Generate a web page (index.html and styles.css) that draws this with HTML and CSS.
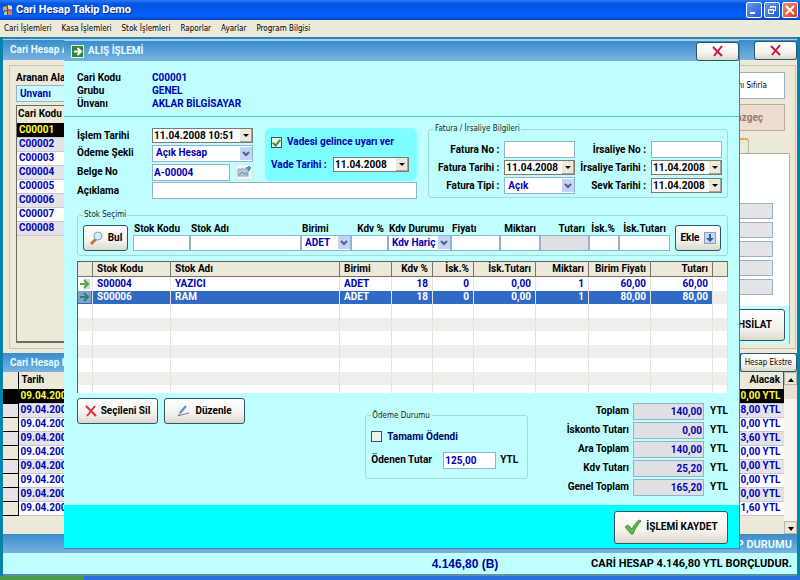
FILE: index.html
```
<!DOCTYPE html>
<html lang="tr">
<head>
    <meta charset="UTF-8">
    <meta name="viewport" content="width=device-width, initial-scale=1.0">
    <title>Cari Hesap Takip Demo</title>
    <link rel="stylesheet" href="styles.css">
</head>
<body>

<header class="titlebar">
    <svg width="12" height="12" viewBox="0 0 12 12"><path d="M1 3l4-1v4l-4 1z" fill="#f0a040"/><path d="M6 1l4 1v4L6 5z" fill="#e8d8a0"/><path d="M2 8l3-1v4l-3 0z" fill="#9fc4f0"/><path d="M6 6l4 1v4l-4 0z" fill="#f07830"/></svg>
    <h1>Cari Hesap Takip Demo</h1>
    <div class="win-buttons">
        <button aria-label="Simge"><svg width="14" height="14" viewBox="0 0 14 14"><path d="M3 10h5" stroke="#fff" stroke-width="2"/></svg></button>
        <button aria-label="Boyut"><svg width="14" height="14" viewBox="0 0 14 14" fill="none" stroke="#fff"><path d="M5.500 5V3.500h5v4H9M3.500 6.500h5v4h-5zM5 4h6M3 7h6"/></svg></button>
        <button class="red" aria-label="Kapat"><svg width="14" height="14" viewBox="0 0 14 14"><path d="M3 3l8 8M11 3l-8 8" stroke="#fff" stroke-width="2"/></svg></button>
    </div>
</header>

<nav class="menubar">
    <a href="#">Cari İşlemleri</a>
    <a href="#">Kasa İşlemleri</a>
    <a href="#">Stok İşlemleri</a>
    <a href="#">Raporlar</a>
    <a href="#">Ayarlar</a>
    <a href="#">Program Bilgisi</a>
</nav>

<!-- ARKA PENCERE -->
<main class="desktop">
    <div class="window">
        <div class="bar bar-top">
            <span>Cari Hesap A</span>
            <button class="btn close" aria-label="Kapat"><svg width="12" height="12" viewBox="0 0 12 12"><path d="M1 2l9 9M10 1L2 11" stroke="#c01848" stroke-width="2" fill="none"/></svg></button>
        </div>

        <div class="upper">
            <div class="search">
                <label for="aranan">Aranan Alan</label>
                <select id="aranan" class="plain"><option>Ünvanı</option></select>
                <div class="list">
                    <table>
                        <thead><tr><th>Cari Kodu</th></tr></thead>
                        <tbody>
                            <tr class="active"><td>C00001</td></tr>
                            <tr><td>C00002</td></tr>
                            <tr><td>C00003</td></tr>
                            <tr><td>C00004</td></tr>
                            <tr><td>C00005</td></tr>
                            <tr><td>C00006</td></tr>
                            <tr><td>C00007</td></tr>
                            <tr><td>C00008</td></tr>
                        </tbody>
                    </table>
                </div>
            </div>
            <div class="side">
                <button class="reset">nı Sıfırla</button>
                <button class="cancel" disabled>Vazgeç</button>
                <div class="tab"></div>
                <div class="panel">
                    <div class="slots"><i></i><i></i><i></i><i></i><i></i></div>
                    <div class="panel-foot"><button class="btn">TAHSİLAT</button></div>
                </div>
            </div>
        </div>

        <div class="bar bar-mid">
            <span>Cari Hesap H</span>
            <button class="btn extract">Hesap Ekstre</button>
        </div>

        <div class="moves">
            <table>
                <thead><tr><th class="mark"></th><th>Tarih</th><th class="num">Alacak</th></tr></thead>
                <tbody>
                    <tr class="active"><td class="mark"><svg width="5" height="8" viewBox="0 0 5 8"><path d="M0 0l5 4-5 4z"/></svg></td><td>09.04.2008</td><td class="num">0,00 YTL</td></tr>
                    <tr><td class="mark"></td><td>09.04.2008</td><td class="num">8,00 YTL</td></tr>
                    <tr><td class="mark"></td><td>09.04.2008</td><td class="num">0,00 YTL</td></tr>
                    <tr><td class="mark"></td><td>09.04.2008</td><td class="num">3,60 YTL</td></tr>
                    <tr><td class="mark"></td><td>09.04.2008</td><td class="num">0,00 YTL</td></tr>
                    <tr><td class="mark"></td><td>09.04.2008</td><td class="num">0,00 YTL</td></tr>
                    <tr><td class="mark"></td><td>09.04.2008</td><td class="num">0,00 YTL</td></tr>
                    <tr><td class="mark"></td><td>09.04.2008</td><td class="num">0,00 YTL</td></tr>
                    <tr><td class="mark"></td><td>09.04.2008</td><td class="num">1,60 YTL</td></tr>
                </tbody>
            </table>
            <div class="scroll">
                <button aria-label="Yukarı"><svg width="6" height="4" viewBox="0 0 6 4"><path d="M0 4l3-4 3 4z"/></svg></button>
                <i></i>
                <button aria-label="Aşağı"><svg width="6" height="4" viewBox="0 0 6 4"><path d="M0 0l3 4 3-4z"/></svg></button>
            </div>
        </div>

        <div class="bar summary-head"><span>HESAP BAKİYESİ</span><span>HESAP DURUMU</span></div>
        <div class="summary"><span>4.146,80 (B)</span><span>CARİ HESAP 4.146,80 YTL BORÇLUDUR.</span></div>
    </div>
</main>
<footer class="taskbar"><i></i></footer>

<!-- ALIŞ İŞLEMİ -->
<section class="dialog">
    <div class="bar dialog-head">
        <svg width="13" height="13" viewBox="0 0 13 13"><rect width="13" height="13" fill="#dff0d8"/><rect x="1" y="1" width="11" height="11" fill="#2f8a34"/><path d="M3 6.500h7M6.500 3L10 6.500 6.500 10" stroke="#fff" stroke-width="2" fill="none"/></svg>
        <h2>ALIŞ İŞLEMİ</h2>
        <button class="btn close" aria-label="Kapat"><svg width="12" height="12" viewBox="0 0 12 12"><path d="M1 2l9 9M10 1L2 11" stroke="#c01848" stroke-width="2" fill="none"/></svg></button>
    </div>

    <dl class="account">
        <dt>Cari Kodu</dt><dd>C00001</dd>
        <dt>Grubu</dt><dd>GENEL</dd>
        <dt>Ünvanı</dt><dd>AKLAR BİLGİSAYAR</dd>
    </dl>

    <div class="content">
        <div class="form">
            <div class="entry">
                <label for="tarih">İşlem Tarihi</label>
                <div class="date"><input id="tarih" value="11.04.2008 10:51"><button aria-label="Takvim"></button></div>
                <label for="odeme">Ödeme Şekli</label>
                <div class="combo"><select id="odeme"><option>Açık Hesap</option></select><svg viewBox="0 0 12 13"><path d="M3 5l3 3 3-3"/></svg></div>
                <label for="belge">Belge No</label>
                <div class="doc">
                    <input id="belge" value="A-00004">
                    <button aria-label="Belge"><svg width="15" height="13" viewBox="0 0 15 13"><rect x="1" y="4" width="10" height="7" fill="#bcc8cc" stroke="#8fa6ac"/><path d="M2 10l3-3 2 2 2-1 2 2" stroke="#5b8c9c" fill="none"/><path d="M9 3h5M12 1v5" stroke="#3d9bd0" stroke-width="2"/></svg></button>
                </div>
                <label for="aciklama">Açıklama</label>
                <input id="aciklama" class="wide">
                <div class="due">
                    <label><input type="checkbox" checked>Vadesi gelince uyarı ver</label>
                    <div class="due-row">
                        <label for="vade">Vade Tarihi :</label>
                        <div class="date"><input id="vade" value="11.04.2008"><button aria-label="Takvim"></button></div>
                    </div>
                </div>
            </div>

            <fieldset class="invoice">
                <legend>Fatura / İrsaliye Bilgileri</legend>
                <div class="invoice-grid">
                    <label for="fno">Fatura No :</label><input id="fno">
                    <label for="ino">İrsaliye No :</label><input id="ino">
                    <label for="ftarih">Fatura Tarihi :</label>
                    <div class="date"><input id="ftarih" value="11.04.2008"><button aria-label="Takvim"></button></div>
                    <label for="itarih">İrsaliye Tarihi :</label>
                    <div class="date"><input id="itarih" value="11.04.2008"><button aria-label="Takvim"></button></div>
                    <label for="ftipi">Fatura Tipi :</label>
                    <div class="combo"><select id="ftipi"><option>Açık</option></select><svg viewBox="0 0 12 13"><path d="M3 5l3 3 3-3"/></svg></div>
                    <label for="starih">Sevk Tarihi :</label>
                    <div class="date"><input id="starih" value="11.04.2008"><button aria-label="Takvim"></button></div>
                </div>
            </fieldset>
        </div>

        <fieldset class="stock">
            <legend>Stok Seçimi</legend>
            <div class="stock-row">
                <button class="btn find"><svg width="15" height="15" viewBox="0 0 15 15"><path d="M7 8l-5 5" stroke="#b5793c" stroke-width="3"/><circle cx="9" cy="5" r="4" fill="#d5ecfb" stroke="#7ba7cf"/></svg>Bul</button>
                <div class="stock-fields">
                    <label for="skodu">Stok Kodu</label>
                    <label for="sadi">Stok Adı</label>
                    <label for="birim">Birimi</label>
                    <label for="kdv" class="r">Kdv %</label>
                    <label for="kdvd">Kdv Durumu</label>
                    <label for="fiyat">Fiyatı</label>
                    <label for="miktar" class="r">Miktarı</label>
                    <label for="tutar" class="r">Tutarı</label>
                    <label for="isk" class="r">İsk.%</label>
                    <label for="iskt" class="r">İsk.Tutarı</label>
                    <input id="skodu">
                    <input id="sadi">
                    <div class="combo"><select id="birim"><option>ADET</option></select><svg viewBox="0 0 12 13"><path d="M3 5l3 3 3-3"/></svg></div>
                    <input id="kdv">
                    <div class="combo"><select id="kdvd"><option>Kdv Hariç</option></select><svg viewBox="0 0 12 13"><path d="M3 5l3 3 3-3"/></svg></div>
                    <input id="fiyat">
                    <input id="miktar">
                    <input id="tutar" class="off" readonly>
                    <input id="isk">
                    <input id="iskt">
                </div>
                <button class="btn add">Ekle<svg width="12" height="12" viewBox="0 0 12 12"><rect x="0.500" y="0.500" width="11" height="11" fill="#c5d8ee" stroke="#8aa0bc"/><path d="M5 2h2v4h3L6 10 2 6h3z" fill="#2a5fa8"/></svg></button>
            </div>
        </fieldset>

        <table class="items">
            <thead>
                <tr>
                    <th class="c-icon"></th><th class="c-code">Stok Kodu</th><th>Stok Adı</th><th class="c-unit">Birimi</th><th class="c-vat num">Kdv %</th><th class="c-vat num">İsk.%</th><th class="c-sum num">İsk.Tutarı</th><th class="c-qty num">Miktarı</th><th class="c-sum num">Birim Fiyatı</th><th class="c-sum num">Tutarı</th><th class="c-icon"></th>
                </tr>
            </thead>
            <tbody>
                <tr><td><svg width="13" height="12" viewBox="0 0 13 12"><rect x="6" y="1" width="6" height="10" fill="#c8dcec"/><path d="M2 6h7M6 2l4 4-4 4" stroke="#4fae32" stroke-width="2" fill="none"/></svg></td><td>S00004</td><td>YAZICI</td><td>ADET</td><td class="num">18</td><td class="num">0</td><td class="num">0,00</td><td class="num">1</td><td class="num">60,00</td><td class="num">60,00</td><td></td></tr>
                <tr class="selected"><td><svg width="13" height="12" viewBox="0 0 13 12"><rect width="13" height="12" fill="#7fa3cc"/><path d="M2 6h7M6 2l4 4-4 4" stroke="#2f7f78" stroke-width="2" fill="none"/></svg></td><td>S00006</td><td>RAM</td><td>ADET</td><td class="num">18</td><td class="num">0</td><td class="num">0,00</td><td class="num">1</td><td class="num">80,00</td><td class="num">80,00</td><td></td></tr>
                <tr><td></td><td></td><td></td><td></td><td></td><td></td><td></td><td></td><td></td><td></td><td></td></tr>
                <tr><td></td><td></td><td></td><td></td><td></td><td></td><td></td><td></td><td></td><td></td><td></td></tr>
                <tr><td></td><td></td><td></td><td></td><td></td><td></td><td></td><td></td><td></td><td></td><td></td></tr>
                <tr><td></td><td></td><td></td><td></td><td></td><td></td><td></td><td></td><td></td><td></td><td></td></tr>
                <tr><td></td><td></td><td></td><td></td><td></td><td></td><td></td><td></td><td></td><td></td><td></td></tr>
                <tr><td></td><td></td><td></td><td></td><td></td><td></td><td></td><td></td><td></td><td></td><td></td></tr>
                <tr class="last"><td></td><td></td><td></td><td></td><td></td><td></td><td></td><td></td><td></td><td></td><td></td></tr>
            </tbody>
        </table>

        <div class="bottom">
            <div class="actions">
                <button class="btn"><svg width="12" height="12" viewBox="0 0 12 12"><path d="M1 1l10 10M10 1L2 11" stroke="#d8303c" stroke-width="2" fill="none"/></svg>Seçileni Sil</button>
                <button class="btn"><svg width="14" height="12" viewBox="0 0 14 12"><path d="M9 1L3 8" stroke="#4b93d1" stroke-width="2"/><path d="M3 8l-2 3 3-1M4 10l8-2" stroke="#6d8296" fill="none"/></svg>Düzenle</button>
            </div>
            <fieldset class="payment">
                <legend>Ödeme Durumu</legend>
                <label class="check"><input type="checkbox">Tamamı Ödendi</label>
                <div class="paid">
                    <label for="odenen">Ödenen Tutar</label><input id="odenen" value="125,00"><span>YTL</span>
                </div>
            </fieldset>
            <div class="totals">
                <label for="t1">Toplam</label><input id="t1" value="140,00" readonly><span>YTL</span>
                <label for="t2">İskonto Tutarı</label><input id="t2" value="0,00" readonly><span>YTL</span>
                <label for="t3">Ara Toplam</label><input id="t3" value="140,00" readonly><span>YTL</span>
                <label for="t4">Kdv Tutarı</label><input id="t4" value="25,20" readonly><span>YTL</span>
                <label for="t5">Genel Toplam</label><input id="t5" value="165,20" readonly><span>YTL</span>
            </div>
        </div>
    </div>

    <div class="dialog-foot">
        <button class="btn save"><svg width="18" height="16" viewBox="0 0 18 16"><path d="M1 8l3-2 4 4c2-4 5-8 8-9l1 1c-3 3-6 8-8 13H7z" fill="#5fb648" stroke="#3f9a38"/></svg>İŞLEMİ KAYDET</button>
    </div>
</section>

</body>
</html>
```
FILE: styles.css
```
* {
    box-sizing: border-box;
}
body {
    margin: 0;
    min-height: 100vh;
    display: flex;
    flex-direction: column;
    position: relative;
    background: #ece9d8;
    font-family: Roboto, "Liberation Sans", sans-serif;
    font-size: 10px;
    font-weight: bold;
    line-height: 12px;
    color: #000;
}
input, select, button {
    font: inherit;
    margin: 0;
    padding: 0;
    border-radius: 0;
}
input, select {
    width: 100%;
    min-width: 0;
    height: 17px;
    border: 1px solid #8fb4d0;
    background: #fff;
    color: #0000b8;
    outline: none;
}
input {
    padding: 0 1px;
}
select {
    appearance: none;
    padding: 0 3px;
}
table {
    border-collapse: collapse;
    table-layout: fixed;
    width: 100%;
}
th, td {
    padding: 0 4px;
    text-align: left;
    white-space: nowrap;
    overflow: hidden;
}
.num {
    text-align: right;
}
h1, h2 {
    margin: 0;
}

/* Ana pencere */
.titlebar {
    height: 20px;
    padding: 0 2px;
    display: flex;
    align-items: center;
    gap: 2px;
    background: linear-gradient(#2a7cf4, #0254e2 20%, #0560f8 80%, #0240c0);
    color: #fff;
}
.titlebar h1 {
    flex: 1;
    font-size: 11px;
    text-shadow: 1px 1px 0 #0a2f90;
}
.win-buttons {
    display: flex;
    gap: 2px;
}
.win-buttons button {
    width: 16px;
    height: 16px;
    border: 1px solid #fff;
    border-radius: 2px;
    background: linear-gradient(135deg, #6a98f4, #2358d8);
    line-height: 0;
}
.win-buttons .red {
    background: linear-gradient(135deg, #f09070, #d8401c);
}
.menubar {
    height: 17px;
    padding: 0 4px;
    display: flex;
    align-items: center;
    gap: 10px;
    font-family: "DejaVu Sans Condensed", "DejaVu Sans", sans-serif;
    font-size: 8px;
    font-weight: normal;
}
.menubar a {
    color: #000;
    text-decoration: none;
}
.desktop {
    flex: 1;
    padding: 0 3px;
    display: flex;
    background: #0683a6;
}
.window {
    flex: 1;
    display: flex;
    flex-direction: column;
    border-top: 2px solid #2f7fb4;
    border-bottom: 2px solid #5f8fa8;
    background: #ece9d8;
}
.bar {
    display: flex;
    align-items: center;
    background: linear-gradient(#3a8ccc, #78b2e0);
    color: #e4fbff;
}
.bar-top {
    height: 21px;
    padding-left: 7px;
    justify-content: space-between;
    border-top: 1px solid #9fd4ee;
}
.btn {
    display: flex;
    align-items: center;
    justify-content: center;
    gap: 4px;
    border: 1px solid #2f5568;
    border-radius: 3px;
    background: linear-gradient(#fff, #f4f3ee 60%, #dcd8cc);
    color: #000;
    white-space: nowrap;
}
.close {
    width: 43px;
    height: 19px;
}
.upper {
    margin: 5px 1px 4px 6px;
    height: 284px;
    display: flex;
    justify-content: space-between;
    border: 1px solid #c8c4b4;
}
.search {
    width: 200px;
    padding: 6px 0 5px 6px;
    display: flex;
    flex-direction: column;
}
.search .plain {
    margin: 1px 0 3px;
    background: #c9fdfd;
}
.list {
    flex: 1;
    border: 2px solid #6e6c64;
    border-right: none;
    border-width: 1px 0 2px 1px;
}
.list th {
    height: 17px;
    padding: 0 1px;
    border-bottom: 1px solid #000;
}
.list td, .moves td {
    height: 14px;
    padding: 0 2px;
    border-bottom: 1px solid #c8c8d0;
    background: #fff;
    color: #0000b8;
}
.list tr:nth-child(even) td, .moves tr:nth-child(even) td {
    background: #e4e4e8;
}
.list .active td, .moves .active td {
    background: #000;
    color: #ff3;
}
.side {
    width: 150px;
    padding: 6px 5px 4px 0;
    display: flex;
    flex-direction: column;
}
.side .reset, .side .cancel {
    height: 27px;
    margin: 0 5px 5px 0;
    padding-right: 17px;
    border: 1px solid #9ab0c4;
    background: #fff;
    text-align: right;
}
.side .reset {
    font-family: "DejaVu Sans Condensed", "DejaVu Sans", sans-serif;
    font-size: 8px;
    font-weight: normal;
}
.side .cancel {
    padding-right: 21px;
    border-color: #c4a8a0;
    background: #ecdcd2;
    color: #9a7a70;
}
.tab {
    width: 104px;
    height: 15px;
    margin-top: 2px;
    border-top: 2px solid #e8a850;
    border-right: 1px solid #b8b4a8;
    border-radius: 0 3px 0 0;
}
.panel {
    flex: 1;
    display: flex;
    flex-direction: column;
    justify-content: space-between;
    border-right: 1px solid #b0aca0;
    border-top: 1px solid #b0aca0;
    background: #fff;
}
.slots {
    padding: 49px 16px 0 0;
    display: grid;
    gap: 3px;
}
.slots i {
    height: 16px;
    border: 1px solid #9ab0cc;
    background: #e4e4e8;
}
.panel-foot {
    padding: 3px 4px 3px 0;
    background: #bfffff;
}
.panel-foot .btn {
    width: 100%;
    height: 32px;
    padding-right: 12px;
    justify-content: flex-end;
}
.bar-mid {
    height: 19px;
    padding-left: 7px;
    justify-content: space-between;
}
.extract {
    height: 19px;
    padding: 0 4px;
    font-family: "DejaVu Sans Condensed", "DejaVu Sans", sans-serif;
    font-size: 8px;
    font-weight: normal;
}
.moves {
    flex: 1;
    display: flex;
}
.moves table {
    flex: 1;
    align-self: flex-start;
    width: auto;
}
.moves th {
    height: 17px;
    padding: 0 3px;
    border-bottom: 1px solid #000;
    border-right: 1px solid #55534c;
}
.moves .mark {
    width: 15px;
    padding: 0 4px;
    border-bottom: 1px solid #000;
    border-right: 1px solid #000;
    background: #ece9d8;
    line-height: 0;
}
.moves .num {
    padding-right: 3px;
}
.scroll {
    width: 13px;
    display: flex;
    flex-direction: column;
    background: #f6f4ec;
}
.scroll i {
    flex: 1;
    border-top: 14px solid #e6e2d2;
}
.scroll button {
    height: 13px;
    border: 1px solid #b8b4a4;
    background: #ece9d8;
    line-height: 6px;
}
.summary-head {
    height: 19px;
    padding-top: 3px;
}
.summary-head, .summary {
    display: grid;
    grid-template-columns: 1fr 134px 260px;
    align-items: center;
    padding-right: 5px;
    text-align: center;
}
.summary-head span:first-child, .summary span:first-child {
    grid-column: 2;
    white-space: nowrap;
}
.summary-head span:last-child, .summary span:last-child {
    text-align: right;
}
.summary-head, .summary span:last-child {
    font-size: 11px;
}
.summary {
    height: 21px;
    background: #bfffff;
}
.summary span:first-child {
    font-family: "Liberation Sans", sans-serif;
    font-size: 12px;
    color: #0000a8;
}
.taskbar {
    height: 4px;
    background: #2a6fe0;
}
.taskbar i {
    display: block;
    width: 84px;
    height: 4px;
    background: #4a9a48;
}

/* Alış penceresi */
.dialog {
    position: absolute;
    top: 40px;
    left: 64px;
    right: 60px;
    border-right: 1px solid #4a7f98;
    border-bottom: 1px solid #3a8aa8;
    background: #bfffff;
}
.dialog-head {
    height: 21px;
    padding-left: 7px;
    gap: 4px;
    border-top: 1px solid #9fd4ee;
}
.dialog-head h2 {
    flex: 1;
    font-size: 10px;
}
.account {
    margin: 0;
    padding: 10px 13px 6px;
    display: grid;
    grid-template-columns: 75px 1fr;
    line-height: 13px;
    border-bottom: 1px solid #4fc8c0;
}
.account dd {
    margin: 0;
    color: #0000b8;
}
.content {
    padding: 7px 11px 9px 13px;
}
.form {
    display: flex;
    gap: 11px;
    align-items: flex-start;
}
.entry {
    margin-top: 4px;
    display: grid;
    grid-template-columns: 75px 101px 164px;
    row-gap: 1px;
    align-items: center;
}
.entry .wide {
    grid-column: 2 / 4;
}
.entry > .date {
    grid-column: 2;
}
.due {
    grid-column: 3;
    grid-row: 1 / 4;
    margin-left: 12px;
    height: 53px;
    padding: 8px 8px 0 6px;
    border-radius: 6px;
    background: #7fffff;
    color: #0000b8;
    white-space: nowrap;
}
.due label {
    display: flex;
    align-items: center;
    gap: 5px;
}
.due-row {
    margin-top: 9px;
    display: flex;
    justify-content: space-between;
    align-items: center;
}
.due-row .date {
    width: 76px;
}
.date {
    height: 15px;
    display: flex;
    border: 1px solid #7a7a70;
    background: #fff;
}
.date input {
    height: 13px;
    border: none;
    color: #000;
}
.date button {
    flex: none;
    width: 12px;
    border: 1px solid #a8a498;
    border-width: 0 1px 1px 0;
    background: #ece9d8;
    display: flex;
    align-items: center;
    justify-content: center;
}
.date button::after {
    content: "";
    border: 3px solid transparent;
    border-top-color: #000;
    border-bottom: none;
}
.combo {
    position: relative;
}
.combo select {
    display: block;
}
.combo svg {
    position: absolute;
    top: 2px;
    right: 1px;
    width: 12px;
    height: 13px;
    background: #c4d4f6;
    fill: none;
    stroke: #4d6185;
    stroke-width: 2;
    pointer-events: none;
}
.doc {
    display: flex;
    justify-content: space-between;
}
.doc input {
    width: 78px;
}
.doc button {
    width: 18px;
    height: 16px;
    border: 1px solid #d4eaea;
    background: #eef8f6;
    line-height: 0;
}
input[type="checkbox"] {
    appearance: none;
    width: 11px;
    height: 11px;
    border: 1px solid #2f5568;
    background: #f0f0ec;
    display: flex;
    justify-content: center;
}
input[type="checkbox"]:checked::after {
    content: "";
    width: 3px;
    height: 6px;
    border: solid #2f9a2f;
    border-width: 0 2px 2px 0;
    transform: rotate(40deg);
}
fieldset {
    min-width: 0;
    margin: 0;
    padding: 0;
    border: 1px solid #a8d8d8;
    border-radius: 3px;
}
legend {
    margin-left: 5px;
    padding: 0 1px;
    height: 10px;
    line-height: 10px;
    font-family: "DejaVu Sans Condensed", "DejaVu Sans", sans-serif;
    font-size: 8px;
    font-weight: normal;
    color: #222;
}
.invoice {
    flex: 1;
}
.invoice-grid {
    padding: 7px 5px 3px 3px;
    display: grid;
    grid-template-columns: auto 71px auto 71px;
    justify-content: end;
    gap: 2px 5px;
    align-items: center;
    text-align: right;
    white-space: nowrap;
}
.stock {
    margin-top: 11px;
}
.stock-row {
    padding: 2px 6px 4px 5px;
    display: flex;
    align-items: flex-end;
    gap: 5px;
}
.find {
    width: 45px;
    height: 26px;
}
.add {
    width: 46px;
    height: 26px;
}
.stock-fields {
    flex: 1;
    display: grid;
    grid-template-columns: 57px 1fr 50px 37px 63px 49px 40px 49px 30px 51px;
    white-space: nowrap;
}
.stock-fields input, .stock-fields select {
    height: 16px;
}
.stock-fields label {
    padding: 0 2px 0 1px;
    line-height: 13px;
}
.stock-fields .combo svg {
    top: 1px;
}
.stock-fields .r {
    text-align: right;
    padding-right: 4px;
}
.stock-fields .off, .totals input {
    background: #e0e0e4;
}
.items {
    margin-top: 5px;
    border-left: 1px solid #55655f;
    border-top: 1px solid #55655f;
    background: #fff;
}
.items th {
    height: 15px;
    border: solid #77756c;
    border-width: 0 1px 1px 0;
    background: #ece9d8;
}
.items td {
    height: 14px;
    border-right: 1px solid #e4e4dc;
    line-height: 10px;
    color: #0000b8;
}
.items tr:nth-child(even) td {
    height: 13px;
    background: #eeeeea;
}
.items .selected td:not(:last-child) {
    background: #316ac5;
    color: #fff;
}
.items td:first-child {
    padding: 0;
    line-height: 0;
}
.items .last td {
    height: 8px;
}
.items .c-icon {
    width: 15px;
    padding: 0;
}
.c-code {
    width: 78px;
}
.c-unit {
    width: 52px;
}
.c-vat {
    width: 41px;
}
.c-sum {
    width: 62px;
}
.c-qty {
    width: 53px;
}
.bottom {
    margin-top: 5px;
    display: flex;
    align-items: flex-start;
    justify-content: space-between;
}
.actions {
    display: flex;
    gap: 6px;
}
.actions .btn {
    width: 81px;
    height: 26px;
}
.payment {
    width: 163px;
    margin: 13px 0 0 82px;
    padding: 10px 5px 9px;
}
.payment legend {
    margin-left: 0;
}
.check {
    display: flex;
    align-items: center;
    gap: 5px;
    color: #00006a;
}
.paid {
    margin-top: 9px;
    display: grid;
    grid-template-columns: 1fr 53px 22px;
    gap: 4px;
    align-items: center;
    white-space: nowrap;
}
.totals {
    margin-top: 5px;
    display: grid;
    grid-template-columns: auto 71px 20px;
    gap: 2px 4px;
    align-items: center;
    text-align: right;
}
.totals input {
    text-align: right;
}
.dialog-foot {
    height: 43px;
    padding: 6px 11px 4px;
    display: flex;
    justify-content: flex-end;
    background: #00ffff;
}
.save {
    width: 114px;
}
```
